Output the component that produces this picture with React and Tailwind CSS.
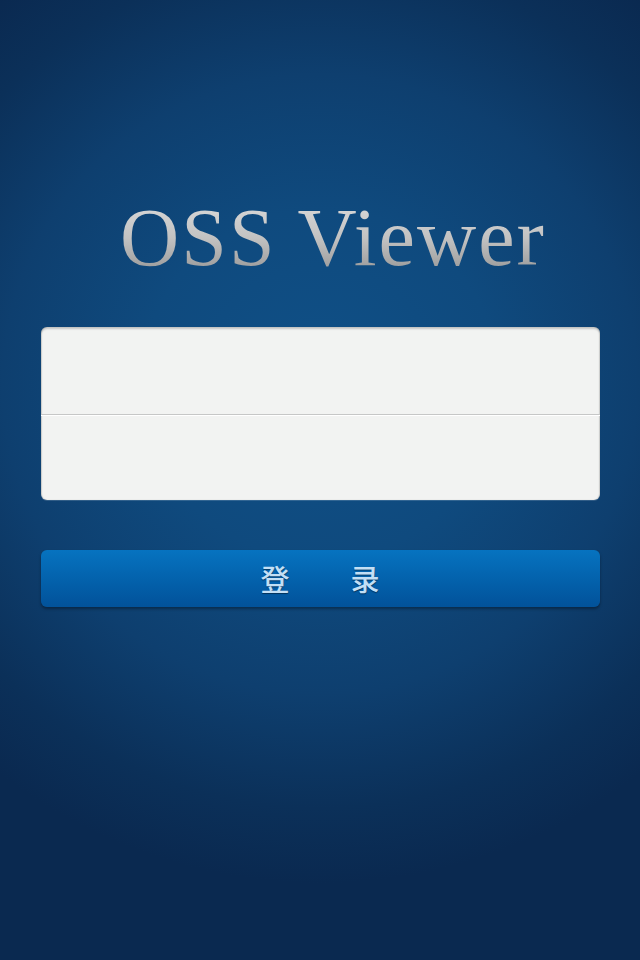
import React, { useState } from "react";

const App = () => {
  const [username, setUsername] = useState("");
  const [password, setPassword] = useState("");

  return (
    <div className="w-[640px] h-[960px] overflow-hidden bg-[#0a2950] bg-[radial-gradient(ellipse_80%_52%_at_50%_40%,#0f5087_0%,#0f4a7e_35%,#0e3f6f_62%,#0b3059_85%,#0a2950_100%)] flex flex-col items-center">
      <h1
        className="mt-[188px] ml-[26px] h-[100px] text-[82px] leading-[100px] tracking-[2px] bg-gradient-to-b from-[#e2e2e2] via-[#c2c2c2] to-[#888888] bg-clip-text text-transparent"
        style={{ fontFamily: '"Liberation Serif", "Times New Roman", serif' }}
      >
        OSS Viewer
      </h1>

      <div className="mt-[39px] w-[559px] h-[173px] rounded-[6px] bg-[#f2f3f2] shadow-[inset_0_2px_2px_rgba(0,0,0,0.18),inset_1px_0_1px_rgba(0,0,0,0.12),inset_-1px_0_1px_rgba(0,0,0,0.12),0_1px_0_rgba(255,255,255,0.15)] flex flex-col overflow-hidden">
        <input
          value={username}
          onChange={(e) => setUsername(e.target.value)}
          type="text"
          className="h-[88px] w-full shrink-0 bg-transparent px-4 outline-none border-b border-b-[#c6c7c7]"
        />
        <div className="h-px bg-white" />
        <input
          value={password}
          onChange={(e) => setPassword(e.target.value)}
          type="password"
          className="flex-1 w-full bg-transparent px-4 outline-none"
        />
      </div>

      <button className="mt-[50px] w-[559px] h-[57px] rounded-[6px] bg-gradient-to-b from-[#0673c0] to-[#02529a] shadow-[0_2px_3px_rgba(0,0,0,0.35)] flex items-center justify-center">
        <span
          className="text-[29px] font-medium text-[#c2dff5] tracking-[61px] mr-[-61px] [text-shadow:0_1px_1px_rgba(0,0,0,0.45)]"
          style={{ fontFamily: '"Noto Sans CJK SC", sans-serif' }}
        >
          登录
        </span>
      </button>
    </div>
  );
};

export default App;
